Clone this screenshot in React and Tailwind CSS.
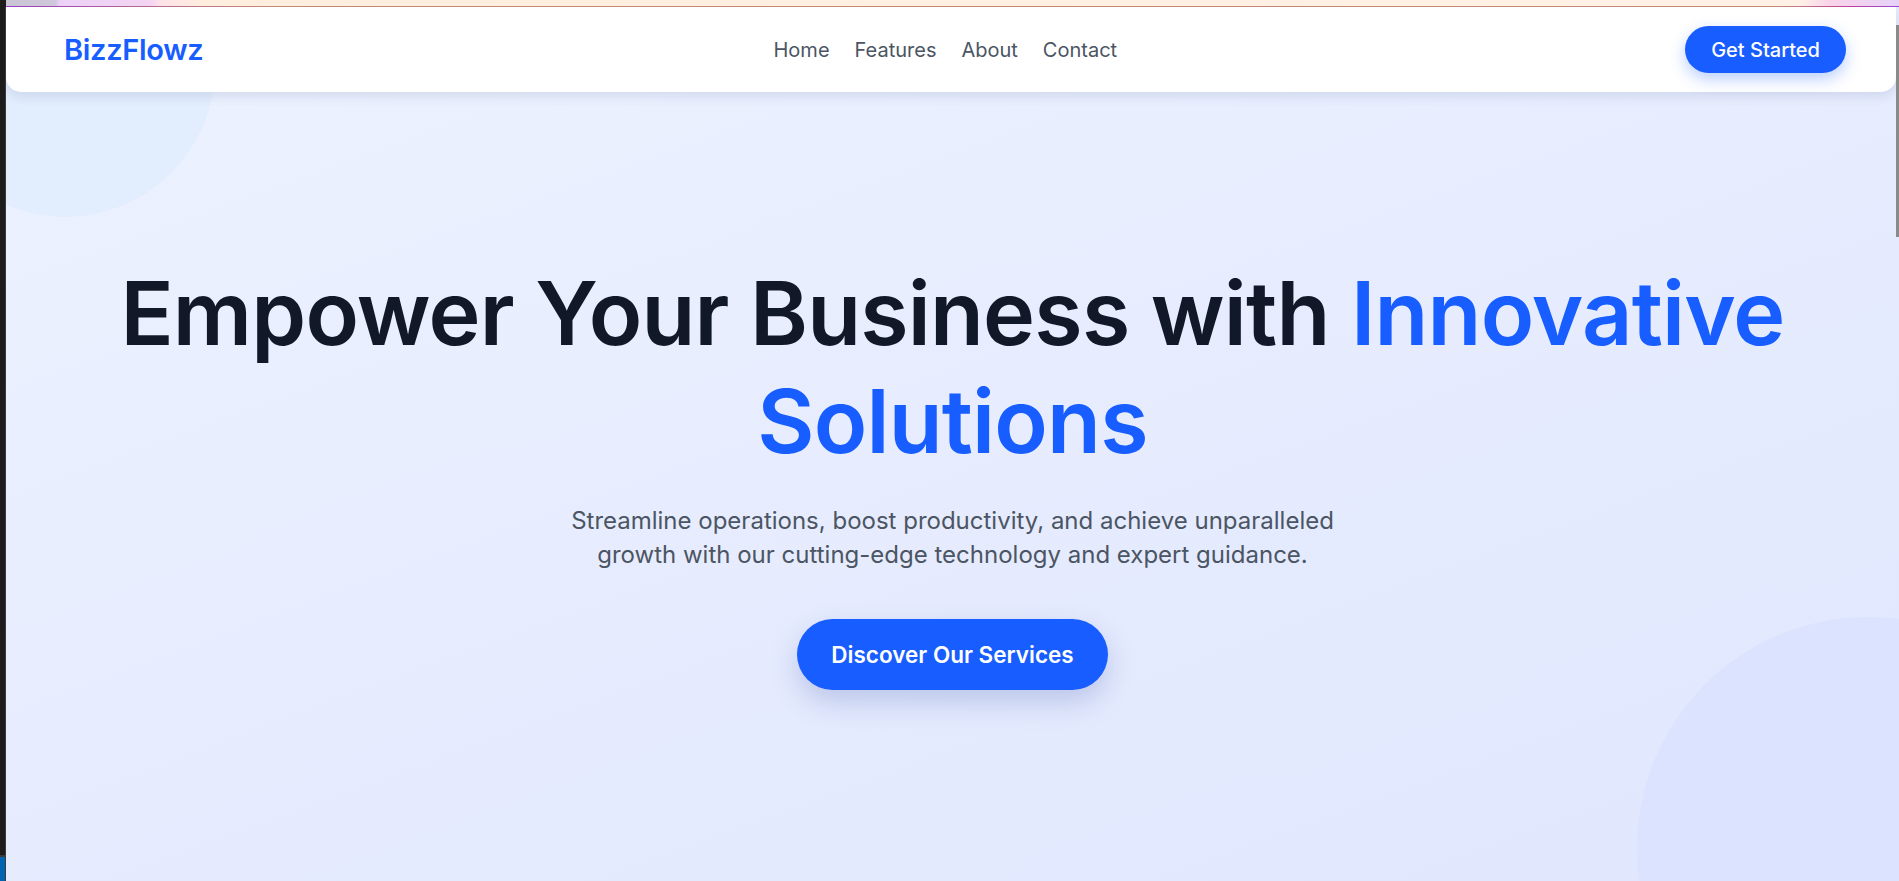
import React from 'react';

const navLinks = ['Home', 'Features', 'About', 'Contact'];

export default function App() {
  return (
    <div className="w-full h-[881px] overflow-hidden flex flex-col font-['Inter',sans-serif] bg-[#1c1c1c]">
      {/* window strip on top */}
      <div className="h-[6px] w-full bg-[linear-gradient(to_right,#1c1c1c_0px,#1c1c1c_6px,#c9c5d3_6px,#cfc7dc_55px,#ecd2f8_60px,#f3d4f2_150px,#fde2e8_160px,#ffeedd_205px,#fff1e6_1800px,#f9d3ea_1830px,#e6d2f8_1899px)]" />
      <div className="h-px w-full bg-[linear-gradient(to_right,#1c1c1c_0px,#1c1c1c_6px,#9a3ec6_6px,#b0609a_120px,#c48a78_260px,#c48a78_1780px,#c0409e_1850px,#9b48d8_1899px)]" />

      <div className="flex flex-1 min-h-0">
        {/* left window edge */}
        <div className="w-[6px] flex flex-col border-r border-[#3b3b3b]">
          <div className="flex-1 bg-[#1c1c1c]" />
          <div className="h-[2px] bg-[#3a3a3a]" />
          <div className="h-[24px] bg-[#0063b1]" />
        </div>

        {/* page */}
        <main className="relative flex-1 overflow-hidden bg-[linear-gradient(160deg,#ecf2fe_0%,#e6ecfe_55%,#e0e6fd_100%)]">
          {/* decorative blobs */}
          <div className="absolute -left-[91px] -top-[90px] w-[300px] h-[300px] rounded-full bg-[#e2edfd]" />
          <div className="absolute left-[1631px] top-[610px] w-[462px] h-[462px] rounded-full bg-[#dbe3fe]" />

          {/* scrollbar thumb */}
          <div className="absolute right-0 top-[18px] w-[3px] h-[212px] bg-[#8a8a8a] z-20" />

          <div className="relative z-10 flex flex-col">
            {/* Navbar */}
            <header className="mr-[3px] h-[85px] bg-white rounded-b-[15px] shadow-[0_4px_12px_rgba(30,50,110,0.12)] flex items-center justify-between pl-[58px] pr-[50px]">
              <span className="text-[29px] font-semibold tracking-[-0.3px] text-[#175dff]">BizzFlowz</span>
              <nav className="flex items-center gap-[25px] ml-[2px]">
                {navLinks.map((link) => (
                  <a key={link} href="#" className="text-[20px] text-[#4b5563]">
                    {link}
                  </a>
                ))}
              </nav>
              <button className="h-[47px] px-[26px] rounded-full bg-[#175dff] text-white text-[20px] font-medium shadow-[0_6px_16px_rgba(23,93,255,0.3)]">
                Get Started
              </button>
            </header>

            {/* Hero */}
            <section className="flex flex-col items-center text-center pt-[167px]">
              <h1 className="text-[88px] leading-[108px] font-semibold tracking-[-0.8px] text-[#111827]">
                Empower Your Business with <span className="text-[#175dff]">Innovative</span>
                <br />
                <span className="text-[#175dff]">Solutions</span>
              </h1>
              <p className="mt-[29px] max-w-[810px] text-[24px] leading-[34px] text-[#4b5563]">
                Streamline operations, boost productivity, and achieve unparalleled growth with our cutting-edge technology and expert guidance.
              </p>
              <button className="mt-[47px] h-[71px] px-[34px] rounded-full bg-[#175dff] text-white text-[22.5px] font-semibold shadow-[0_12px_28px_rgba(40,70,160,0.22)]">
                Discover Our Services
              </button>
            </section>
          </div>
        </main>
      </div>
    </div>
  );
}
